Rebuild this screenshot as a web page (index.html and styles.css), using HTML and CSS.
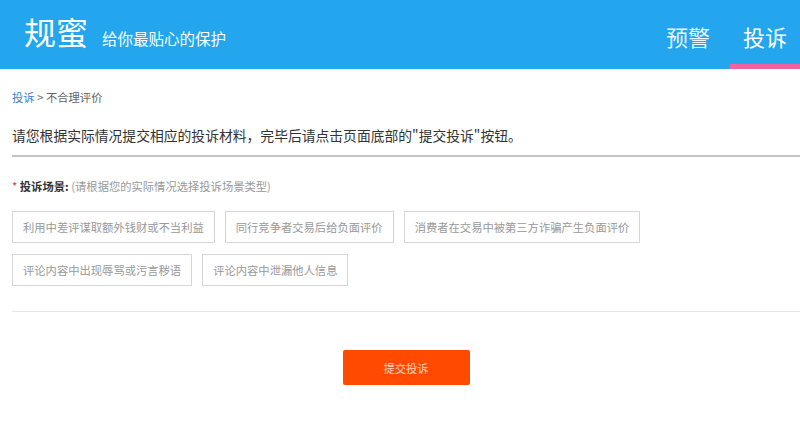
FILE: index.html
```html
<!DOCTYPE html>
<html lang="zh-CN">
<head>
<meta charset="utf-8">
<title>规蜜 - 投诉</title>
<link rel="stylesheet" href="styles.css">
</head>
<body>
<header class="header">
  <div class="brand">
    <span class="logo">规蜜</span>
    <span class="slogan">给你最贴心的保护</span>
  </div>
  <nav class="nav">
    <a class="nav-item">预警</a>
    <a class="nav-item active">投诉</a>
  </nav>
</header>
<main class="content">
  <div class="crumb"><a class="crumb-link">投诉</a> &gt; 不合理评价</div>
  <div class="intro">请您根据实际情况提交相应的投诉材料，完毕后请点击页面底部的"提交投诉"按钮。</div>
  <div class="label"><span class="req">*</span> <b class="label-title">投诉场景:</b> <span class="hint">(请根据您的实际情况选择投诉场景类型)</span></div>
  <div class="options">
    <span class="option">利用中差评谋取额外钱财或不当利益</span>
    <span class="option">同行竞争者交易后给负面评价</span>
    <span class="option">消费者在交易中被第三方诈骗产生负面评价</span>
    <span class="option">评论内容中出现辱骂或污言秽语</span>
    <span class="option">评论内容中泄漏他人信息</span>
  </div>
  <div class="divider"></div>
  <div class="actions">
    <button class="submit">提交投诉</button>
  </div>
</main>
</body>
</html>
```

FILE: styles.css
```css
* { box-sizing: border-box; }
html, body { margin: 0; padding: 0; background: #fff; }
body {
  font-family: "Noto Sans CJK SC", "Noto Sans", "Liberation Sans", sans-serif;
  color: #333;
}
.header {
  height: 69px;
  background: #23a6ee;
  display: flex;
  justify-content: space-between;
  color: #fff;
}
.brand {
  display: flex;
  align-items: baseline;
  padding-left: 24px;
  padding-top: 12px;
}
.logo {
  font-size: 32px;
  line-height: 38px;
}
.slogan {
  font-size: 15.5px;
  margin-left: 14px;
}
.nav {
  display: flex;
  gap: 7px;
}
.nav-item {
  width: 70px;
  display: flex;
  align-items: center;
  justify-content: center;
  font-size: 22px;
  padding-top: 8px;
  border-bottom: 5px solid transparent;
  color: rgba(255,255,255,0.92);
}
.nav-item.active {
  color: #fff;
  border-bottom-color: #f2629f;
}
.content {
  padding-left: 12px;
  display: flex;
  flex-direction: column;
}
.crumb {
  margin-top: 18px;
  font-size: 11.3px;
  line-height: 20px;
  color: #666;
}
.crumb-link { color: #3d7fcf; }
.intro {
  margin-top: 18px;
  font-size: 13.8px;
  line-height: 20px;
  padding-bottom: 10px;
  border-bottom: 2px solid #c2c2c2;
  color: #333;
}
.label {
  margin-top: 19px;
  font-size: 11.3px;
  line-height: 20px;
}
.req { color: #e4393c; }
.label-title { color: #333; font-weight: 700; }
.hint { color: #999; }
.options {
  margin-top: 15px;
  display: flex;
  flex-wrap: wrap;
  column-gap: 10px;
  row-gap: 11px;
}
.option {
  height: 32px;
  padding: 0 10px;
  border: 1px solid #d6d6d6;
  font-size: 11.3px;
  line-height: 30px;
  color: #999;
  white-space: nowrap;
}
.divider {
  margin-top: 25px;
  height: 1px;
  background: #e6e6e6;
}
.actions {
  display: flex;
  justify-content: center;
  margin-top: 38px;
}
.submit {
  width: 127px;
  height: 35px;
  border: none;
  border-radius: 2px;
  background: #ff4a00;
  color: #ffd3c2;
  font-family: inherit;
  font-size: 11.3px;
}
```
